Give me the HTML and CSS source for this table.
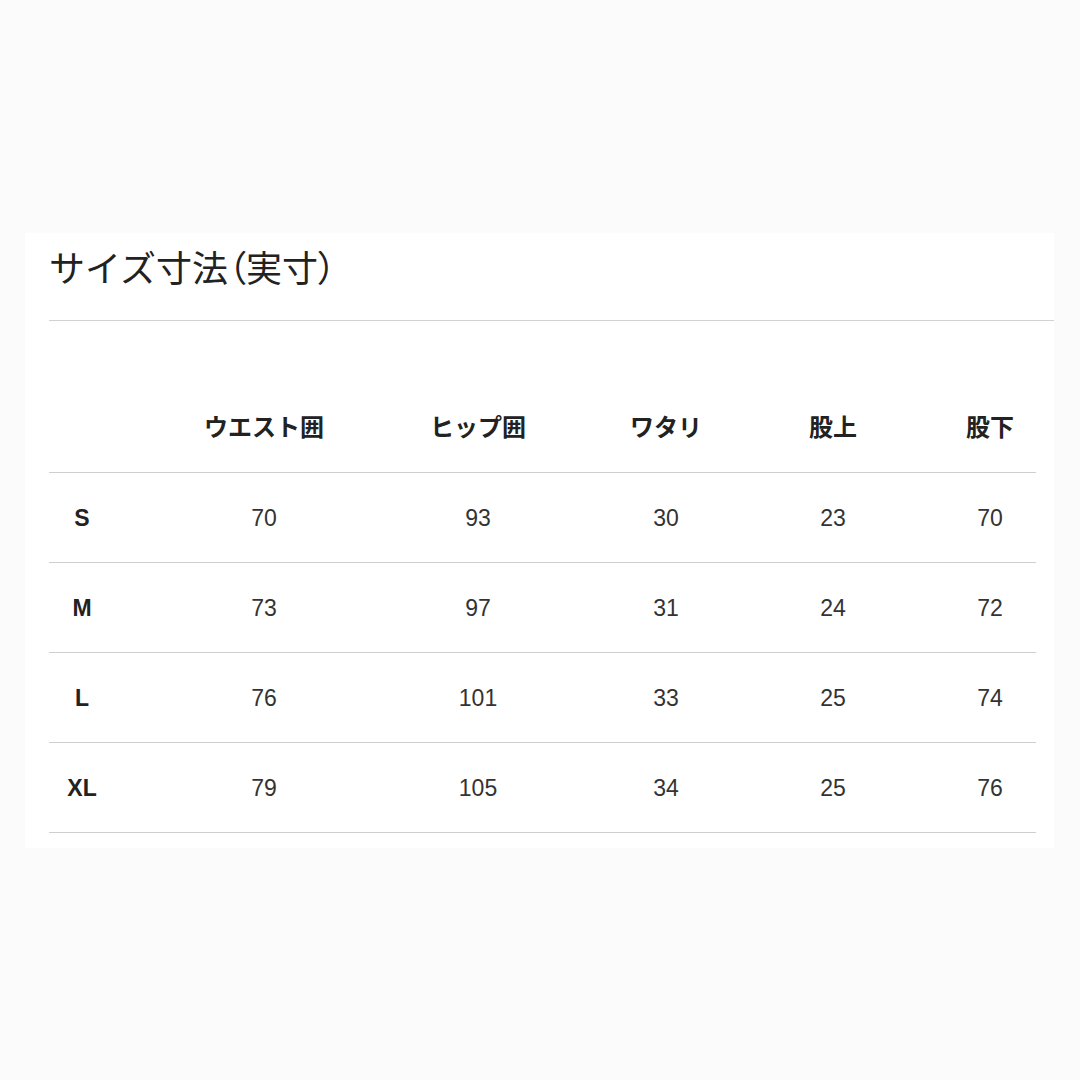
FILE: index.html
```html
<!DOCTYPE html>
<html lang="ja">
<head>
<meta charset="utf-8">
<title>サイズ寸法（実寸）</title>
<link rel="stylesheet" href="styles.css">
</head>
<body>
<div class="page">
  <section class="panel">
    <header class="head">
      <h1 class="title">サイズ寸法<span class="paren">（</span>実寸<span class="paren">）</span></h1>
    </header>
    <div class="table">
      <div class="row row-head">
        <div class="cell"></div>
        <div class="cell">ウエスト囲</div>
        <div class="cell">ヒップ囲</div>
        <div class="cell">ワタリ</div>
        <div class="cell">股上</div>
        <div class="cell">股下</div>
      </div>
      <div class="row">
        <div class="cell size">S</div>
        <div class="cell">70</div>
        <div class="cell">93</div>
        <div class="cell">30</div>
        <div class="cell">23</div>
        <div class="cell">70</div>
      </div>
      <div class="row">
        <div class="cell size">M</div>
        <div class="cell">73</div>
        <div class="cell">97</div>
        <div class="cell">31</div>
        <div class="cell">24</div>
        <div class="cell">72</div>
      </div>
      <div class="row">
        <div class="cell size">L</div>
        <div class="cell">76</div>
        <div class="cell">101</div>
        <div class="cell">33</div>
        <div class="cell">25</div>
        <div class="cell">74</div>
      </div>
      <div class="row">
        <div class="cell size">XL</div>
        <div class="cell">79</div>
        <div class="cell">105</div>
        <div class="cell">34</div>
        <div class="cell">25</div>
        <div class="cell">76</div>
      </div>
    </div>
  </section>
</div>
</body>
</html>
```

FILE: styles.css
```css
html, body {
  margin: 0;
  padding: 0;
}
body {
  background: #fbfbfb;
  width: 1080px;
  height: 1080px;
  overflow: hidden;
  font-family: "Liberation Sans", "Noto Sans CJK JP", sans-serif;
  color: #333;
}
.page {
  padding-top: 233px;
}
.panel {
  margin-left: 25px;
  width: 1029px;
  background: #fff;
  padding-bottom: 15px;
}
.head {
  margin-left: 24px;
  padding-top: 12px;
  padding-bottom: 32px;
  border-bottom: 1px solid #d2d2d2;
}
.title {
  margin: 0;
  font-family: "Noto Sans CJK JP", sans-serif;
  font-weight: 400;
  font-size: 36px;
  line-height: 43px;
  color: #222;
}
.paren {
  font-feature-settings: "palt";
}
.table {
  margin-left: 24px;
  margin-top: 62px;
  width: 987px;
}
.row {
  display: grid;
  grid-template-columns: 66px 79px 140px 74px 140px 48px 140px 37px 120px 51px 92px;
  align-items: center;
  height: 89px;
  border-bottom: 1px solid #cfcfcf;
}
.cell {
  text-align: center;
  font-size: 23px;
  line-height: 28px;
  color: #333;
}
.cell:nth-child(1) { grid-column: 1; }
.cell:nth-child(2) { grid-column: 3; }
.cell:nth-child(3) { grid-column: 5; }
.cell:nth-child(4) { grid-column: 7; }
.cell:nth-child(5) { grid-column: 9; }
.cell:nth-child(6) { grid-column: 11; }
.row-head .cell {
  font-family: "Noto Sans CJK JP", sans-serif;
  font-weight: 700;
  color: #222;
  font-size: 24px;
  padding-bottom: 3px;
}
.size {
  font-weight: 700;
  color: #222;
}
```
